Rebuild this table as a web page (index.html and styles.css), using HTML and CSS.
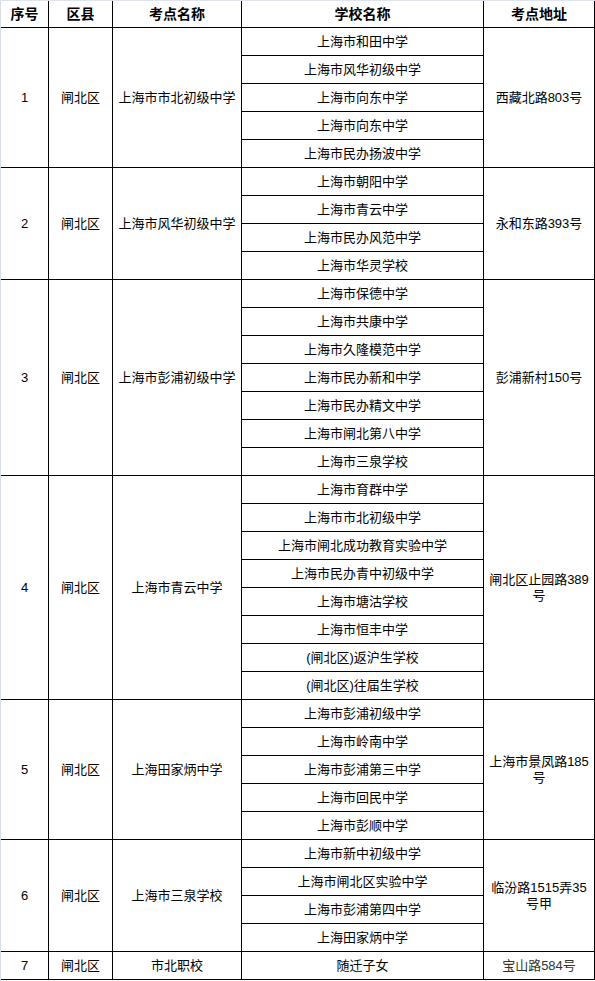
FILE: index.html
```html
<!DOCTYPE html>
<html lang="zh-CN">
<head>
<meta charset="utf-8">
<title>考点</title>
<link rel="stylesheet" href="styles.css">
</head>
<body>
<div class="frame">
  <div class="grid">
    <div class="c h">序号</div>
    <div class="c h">区县</div>
    <div class="c h">考点名称</div>
    <div class="c h">学校名称</div>
    <div class="c h last">考点地址</div>

    <div class="c s5">1</div>
    <div class="c s5">闸北区</div>
    <div class="c s5">上海市市北初级中学</div>
    <div class="c">上海市和田中学</div>
    <div class="c s5 last addr">西藏北路803号</div>
    <div class="c">上海市风华初级中学</div>
    <div class="c">上海市向东中学</div>
    <div class="c">上海市向东中学</div>
    <div class="c">上海市民办扬波中学</div>

    <div class="c s4">2</div>
    <div class="c s4">闸北区</div>
    <div class="c s4">上海市风华初级中学</div>
    <div class="c">上海市朝阳中学</div>
    <div class="c s4 last addr">永和东路393号</div>
    <div class="c">上海市青云中学</div>
    <div class="c">上海市民办风范中学</div>
    <div class="c">上海市华灵学校</div>

    <div class="c s7">3</div>
    <div class="c s7">闸北区</div>
    <div class="c s7">上海市彭浦初级中学</div>
    <div class="c">上海市保德中学</div>
    <div class="c s7 last addr">彭浦新村150号</div>
    <div class="c">上海市共康中学</div>
    <div class="c">上海市久隆模范中学</div>
    <div class="c">上海市民办新和中学</div>
    <div class="c">上海市民办精文中学</div>
    <div class="c">上海市闸北第八中学</div>
    <div class="c">上海市三泉学校</div>

    <div class="c s8">4</div>
    <div class="c s8">闸北区</div>
    <div class="c s8">上海市青云中学</div>
    <div class="c">上海市育群中学</div>
    <div class="c s8 last addr">闸北区止园路389号</div>
    <div class="c">上海市市北初级中学</div>
    <div class="c">上海市闸北成功教育实验中学</div>
    <div class="c">上海市民办青中初级中学</div>
    <div class="c">上海市塘沽学校</div>
    <div class="c">上海市恒丰中学</div>
    <div class="c">(闸北区)返沪生学校</div>
    <div class="c">(闸北区)往届生学校</div>

    <div class="c s5">5</div>
    <div class="c s5">闸北区</div>
    <div class="c s5">上海田家炳中学</div>
    <div class="c">上海市彭浦初级中学</div>
    <div class="c s5 last addr">上海市景凤路185号</div>
    <div class="c">上海市岭南中学</div>
    <div class="c">上海市彭浦第三中学</div>
    <div class="c">上海市回民中学</div>
    <div class="c">上海市彭顺中学</div>

    <div class="c s4">6</div>
    <div class="c s4">闸北区</div>
    <div class="c s4">上海市三泉学校</div>
    <div class="c">上海市新中初级中学</div>
    <div class="c s4 last addr">临汾路1515弄35号甲</div>
    <div class="c">上海市闸北区实验中学</div>
    <div class="c">上海市彭浦第四中学</div>
    <div class="c">上海田家炳中学</div>

    <div class="c">7</div>
    <div class="c">闸北区</div>
    <div class="c">市北职校</div>
    <div class="c">随迁子女</div>
    <div class="c last addr faded">宝山路584号</div>
  </div>
</div>
</body>
</html>
```
FILE: styles.css
```css
html, body {
  margin: 0;
  padding: 0;
  background: #ffffff;
}
.frame {
  width: 595px;
  height: 981px;
  box-sizing: border-box;
  border-left: 1px solid #d6dbe8;
  border-top: 1px solid #dfe3ee;
  overflow: hidden;
}
.grid {
  display: grid;
  grid-template-columns: 48px 64px 129px 242px 111px;
  grid-template-rows: 27px;
  grid-auto-rows: 28px;
  font-family: "Liberation Sans", "Noto Sans CJK SC", sans-serif;
  font-size: 13px;
  color: #000;
}
.c {
  box-sizing: border-box;
  border-right: 1px solid #000;
  border-bottom: 1px solid #000;
  display: flex;
  align-items: center;
  justify-content: center;
  text-align: center;
  line-height: 16px;
  white-space: nowrap;
}
.h {
  font-weight: bold;
  font-size: 14px;
}
.addr {
  white-space: normal;
  padding: 0 4px;
  word-break: break-all;
}
.s4 { grid-row: span 4; }
.s5 { grid-row: span 5; }
.s7 { grid-row: span 7; }
.s8 { grid-row: span 8; }
.faded { color: #333; }
```
